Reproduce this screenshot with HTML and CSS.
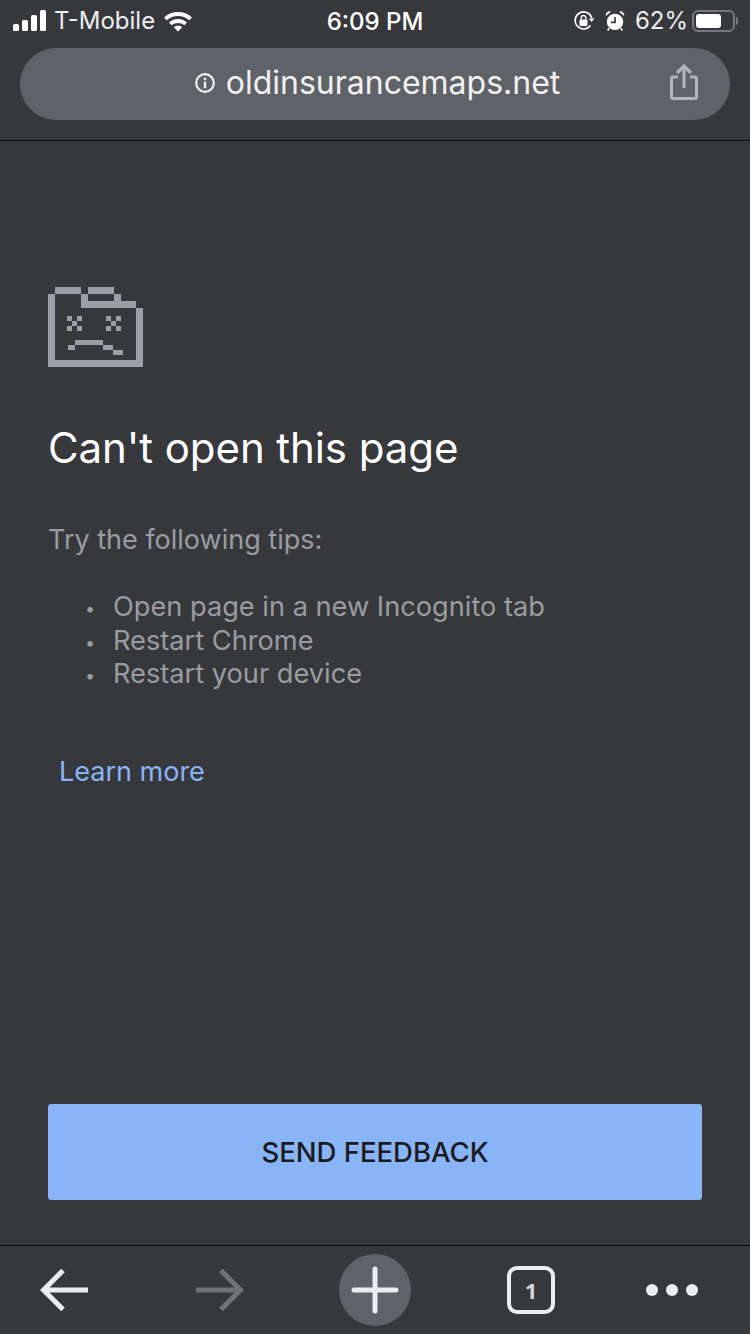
FILE: index.html
```html
<!DOCTYPE html>
<html lang="en">
<head>
  <meta charset="UTF-8" />
  <meta name="viewport" content="width=device-width, initial-scale=1.0"/>
  <title>Can't open this page</title>
  <link rel="stylesheet" href="styles.css">
</head>
<body>

  <header class="top">
    <div class="status">
      <div class="status-left">
        <svg class="signal" width="33" height="21" viewBox="0 0 33 21">
          <rect x="0" y="14" width="6" height="7" rx="1.500"/>
          <rect x="9" y="10" width="6" height="11" rx="1.500"/>
          <rect x="18" y="5" width="6" height="16" rx="1.500"/>
          <rect x="27" y="0" width="6" height="21" rx="1.500"/>
        </svg>
        <span>T-Mobile</span>
        <svg class="wifi" width="30" height="22" viewBox="0 0 30 22">
          <path d="M1 7.500C9 .2 21 .2 29 7.500L26.300 10.300C19.800 4.500 10.200 4.500 3.700 10.300Z"/>
          <path d="M6 12.400C11.300 7.800 18.700 7.800 24 12.400L21.300 15.200C17.600 12.100 12.400 12.100 8.700 15.200Z"/>
          <path d="M10.800 17.200C13.300 15.300 16.700 15.300 19.200 17.200L15 21.500Z"/>
        </svg>
      </div>
      <div class="status-time">6:09 PM</div>
      <div class="status-right">
        <svg class="lock" width="22" height="22" viewBox="0 0 22 22">
          <path d="M17.500 15.500A8.500 8.500 0 1 1 18.800 8" fill="none" stroke="#fff" stroke-width="1.600"/>
          <path d="M15.800 8.500H21.400L18.600 12Z" fill="#fff"/>
          <rect x="6.500" y="9.500" width="8" height="6.500" rx="1" fill="#fff"/>
          <path d="M8.200 9.500V7.800A2.300 2.300 0 0 1 12.800 7.800V9.500" fill="none" stroke="#fff" stroke-width="1.400"/>
        </svg>
        <svg class="alarm" width="20" height="22" viewBox="0 0 22 24">
          <circle cx="11" cy="13" r="9" fill="#fff"/>
          <path d="M11 7.500V13.500H6.500" fill="none" stroke="#37383c" stroke-width="1.800"/>
          <path d="M1 6.500A4 4 0 0 1 6.500 1.800Z M21 6.500A4 4 0 0 0 15.500 1.800Z" fill="#fff"/>
          <path d="M4.500 20L3 22.500M17.500 20L19 22.500" stroke="#fff" stroke-width="1.800"/>
        </svg>
        <span class="percent">62%</span>
        <div class="battery"><div class="battery-fill"></div></div>
        <div class="battery-tip"></div>
      </div>
    </div>

    <div class="address">
      <div class="url">
        <svg width="22" height="22" viewBox="0 0 22 22">
          <circle cx="11" cy="11" r="8.800" fill="none" stroke="#f1f1f3" stroke-width="2.200"/>
          <rect x="9.800" y="5.800" width="2.400" height="2.400" fill="#f1f1f3"/>
          <rect x="9.800" y="9.600" width="2.400" height="6.600" fill="#f1f1f3"/>
        </svg>
        <span>oldinsurancemaps.net</span>
      </div>
      <svg class="share" width="28" height="36" viewBox="0 0 28 36">
        <path d="M8 13H3A1.500 1.500 0 0 0 1.500 14.500V33A1.500 1.500 0 0 0 3 34.500H25A1.500 1.500 0 0 0 26.500 33V14.500A1.500 1.500 0 0 0 25 13H20" fill="none" stroke="#b3b5ba" stroke-width="3"/>
        <path d="M14 3V24" stroke="#b3b5ba" stroke-width="3.200"/>
        <path d="M7 9L14 2L21 9" fill="none" stroke="#b3b5ba" stroke-width="3.200"/>
      </svg>
    </div>
  </header>

  <main>
    <svg class="sad" width="95" height="80" viewBox="0 0 95 80" shape-rendering="crispEdges">
      <path d="M7 0H33V7H7Z"/>
      <path d="M40 0H66V7H73V14H88V21H33V7H40ZM40 7V14H66V7Z" fill-rule="evenodd"/>
      <path d="M0 7H7V73H88V21H95V80H0Z"/>
      <path d="M19 29h5v5h-5zM29 29h5v5h-5zM24 34h5v5h-5zM19 39h5v5h-5zM29 39h5v5h-5z"/>
      <path d="M58 29h5v5h-5zM68 29h5v5h-5zM63 34h5v5h-5zM58 39h5v5h-5zM68 39h5v5h-5z"/>
      <path d="M27 53H55V58H27ZM20 58H27V63H20ZM55 58H65V63H55ZM65 63H75V68H65Z"/>
    </svg>

    <h1>Can't open this page</h1>
    <p class="tips-title">Try the following tips:</p>
    <ul class="tips">
      <li>Open page in a new Incognito tab</li>
      <li>Restart Chrome</li>
      <li>Restart your device</li>
    </ul>
    <a class="learn" href="#">Learn more</a>

    <button class="feedback">SEND FEEDBACK</button>
  </main>

  <footer class="toolbar">
    <svg class="back" width="48" height="44" viewBox="0 0 48 44">
      <path d="M48 22H3M23 2.500L3.500 22L23 41.500" fill="none" stroke="#ecedf1" stroke-width="5"/>
    </svg>
    <svg class="forward" width="48" height="44" viewBox="0 0 48 44">
      <path d="M0 22H45M25 2.500L44.500 22L25 41.500" fill="none" stroke="#727376" stroke-width="5"/>
    </svg>
    <div class="plus">
      <svg width="48" height="48" viewBox="0 0 48 48">
        <path d="M3 24H45M24 3V45" stroke="#ecedf1" stroke-width="5" stroke-linecap="round"/>
      </svg>
    </div>
    <div class="tabs">1</div>
    <div class="dots"><i></i><i></i><i></i></div>
  </footer>

</body>
</html>
```

FILE: styles.css
```css
html, body {
  margin: 0;
  height: 100%;
}
body {
  width: 750px;
  height: 1334px;
  display: flex;
  flex-direction: column;
  background: #37383c;
  font-family: Inter, Arial, sans-serif;
  overflow: hidden;
}

.top {
  height: 141px;
  box-sizing: border-box;
  border-bottom: 1px solid #0c0c0e;
  flex: none;
}
.status {
  height: 48px;
  padding: 0 12px 7px 13px;
  box-sizing: border-box;
  display: flex;
  align-items: center;
  justify-content: space-between;
  color: #fff;
  font-size: 24px;
  position: relative;
}
.status-left {
  display: flex;
  align-items: center;
  gap: 8px;
  color: #eeeef0;
}
.signal, .wifi {
  fill: #fff;
}
.status-time {
  font-weight: 500;
  position: absolute;
  left: 0;
  right: 0;
  top: 7px;
  text-align: center;
}
.status-right {
  display: flex;
  align-items: center;
  color: #eeeef0;
}
.lock, .alarm {
  margin-right: 10px;
}
.percent {
  margin-right: 4px;
}
.battery {
  width: 43px;
  height: 22px;
  box-sizing: border-box;
  border: 2px solid #77787c;
  border-radius: 6px;
  padding: 2px;
}
.battery-fill {
  width: 25px;
  height: 14px;
  background: #fff;
  border-radius: 3px;
}
.battery-tip {
  width: 2px;
  height: 8px;
  margin-left: 1px;
  background: #77787c;
  border-radius: 0 2px 2px 0;
}

.address {
  height: 72px;
  margin: 0 20px;
  border-radius: 36px;
  background: #5f6266;
  display: flex;
  align-items: center;
  justify-content: center;
  position: relative;
}
.url {
  display: flex;
  align-items: center;
  gap: 10px;
  padding: 0 0 3px 4px;
  color: #f1f1f3;
  font-size: 32px;
}
.share {
  position: absolute;
  right: 32px;
  top: 16px;
}

main {
  flex: 1;
  display: flex;
  flex-direction: column;
  align-items: flex-start;
  padding: 146px 48px 45px 48px;
}
.sad {
  fill: #9e9fa6;
  flex: none;
}
h1 {
  margin: 53px 0 0 0;
  font-size: 42px;
  line-height: 56px;
  font-weight: 400;
  letter-spacing: -0.08px;
  color: #fff;
}
.tips-title {
  margin: 44px 0 0 0;
  font-size: 27px;
  line-height: 40px;
  color: #9a9ca1;
}
.tips {
  margin: 30px 0 0 0;
  padding: 0 0 0 37px;
  list-style: none;
  font-size: 27.200px;
  line-height: 33.500px;
  color: #9a9ca1;
}
.tips li {
  height: 33.500px;
}
.tips li::before {
  content: "•";
  display: inline-block;
  width: 28px;
  font-size: 18px;
  line-height: 1;
  vertical-align: 1px;
}
.learn {
  margin: 61px 0 0 11px;
  font-size: 27px;
  line-height: 40px;
  color: #8ab4f8;
  text-decoration: none;
}
.feedback {
  margin-top: auto;
  width: 654px;
  height: 96px;
  flex: none;
  border: 0;
  border-radius: 3px;
  background: #89b4f7;
  color: #1a1b1e;
  font-family: Inter, Arial, sans-serif;
  font-size: 27.500px;
  font-weight: 500;
}

.toolbar {
  height: 89px;
  box-sizing: border-box;
  flex: none;
  border-top: 1px solid #0c0c0e;
  display: flex;
  align-items: center;
  padding-left: 40px;
}
.back {
  margin-right: 108px;
}
.forward {
  margin-right: 95px;
}
.plus {
  width: 72px;
  height: 72px;
  margin-right: 96px;
  border-radius: 50%;
  background: #5f6266;
  display: flex;
  align-items: center;
  justify-content: center;
}
.tabs {
  width: 48px;
  height: 48px;
  margin-right: 91px;
  box-sizing: border-box;
  border: 4px solid #ecedf1;
  border-radius: 10px;
  color: #d5d6da;
  font-family: "Open Sans", sans-serif;
  font-size: 22px;
  font-weight: 700;
  display: flex;
  align-items: center;
  justify-content: center;
}
.dots {
  display: flex;
  gap: 8px;
}
.dots i {
  display: block;
  width: 12px;
  height: 12px;
  border-radius: 50%;
  background: #ecedf1;
}
```
